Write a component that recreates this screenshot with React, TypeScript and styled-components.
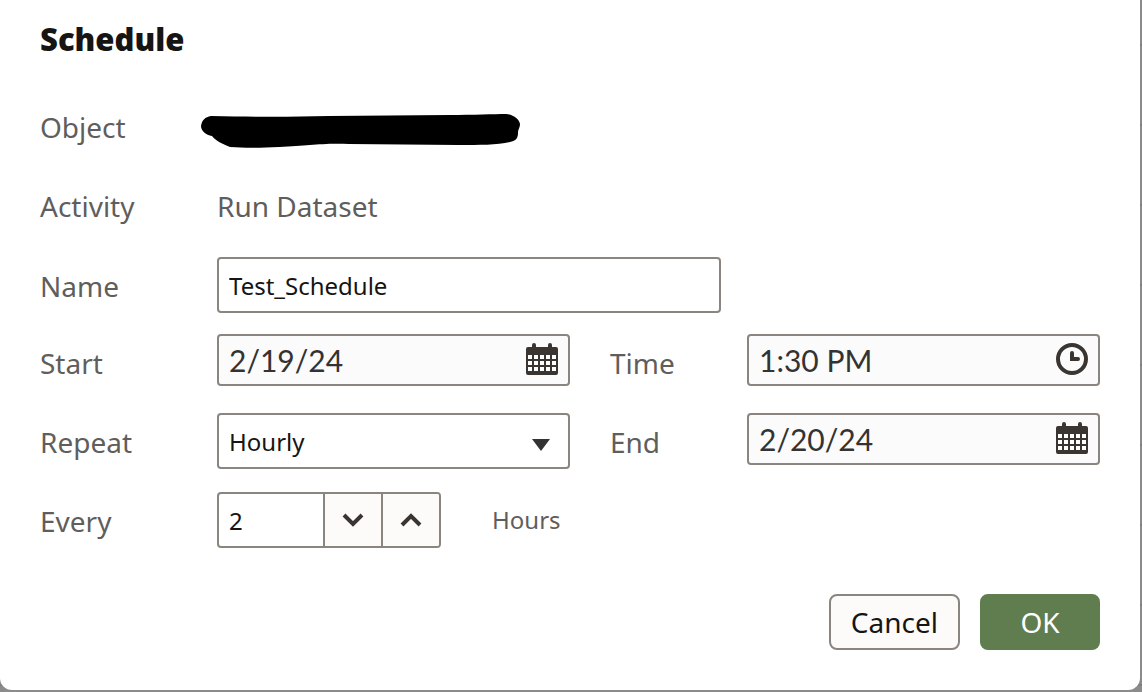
import React from "react";
import styled, { createGlobalStyle } from "styled-components";

const GlobalStyle = createGlobalStyle`
  *, *::before, *::after { box-sizing: border-box; }
  body {
    margin: 0;
    font-family: "Noto Sans", "Open Sans", sans-serif;
    color: #161513;
    background: repeating-linear-gradient(#8b8b8b 0 44px, #808080 44px 46px, #8b8b8b 46px 80px);
  }
`;

const Dialog = styled.form`
  display: flex;
  flex-direction: column;
  min-height: calc(100vh - 2px);
  margin: 0 2px 2px 0;
  padding: 15px 40px 40px;
  background: #ffffff;
  border-radius: 0 0 12px 12px;
`;

const Title = styled.h1`
  margin: 0 0 36px;
  font-size: 31px;
  line-height: 48px;
  font-weight: 900;
`;

const Groups = styled.div`
  display: flex;
  flex-direction: column;
  gap: 21px;
`;

const Rows = styled.div`
  display: flex;
  flex-direction: column;
  gap: 23px;
`;

const Row = styled.div`
  display: flex;
  gap: 40px;
  height: 56px;
`;

const Field = styled.div<{ $narrow?: boolean }>`
  display: flex;
  flex: 1 1 ${(p) => (p.$narrow ? 137 : 177)}px;
  min-width: 0;
  align-items: flex-start;
`;

const labelText = `
  font-size: 28px;
  color: #5f5e5c;
`;

const Label = styled.label<{ $narrow?: boolean }>`
  ${labelText}
  flex: 0 0 ${(p) => (p.$narrow ? 137 : 177)}px;
  line-height: 58px;
`;

const Caption = styled.span`
  ${labelText}
  flex: 0 0 177px;
  line-height: 56px;
`;

const Value = styled.span`
  ${labelText}
  line-height: 56px;
`;

const Unit = styled.span`
  margin-left: 51px;
  font-size: 24px;
  line-height: 56px;
  color: #5f5e5c;
`;

const Box = styled.div<{ $compact?: boolean; $max?: number }>`
  display: flex;
  flex: 1;
  min-width: 0;
  max-width: ${(p) => (p.$max ? `${p.$max}px` : "none")};
  height: ${(p) => (p.$compact ? 52 : 56)}px;
  border: 2px solid #8b8580;
  border-radius: 4px;
  background: ${(p) => (p.$compact ? "#fbfbfb" : "#ffffff")};
  overflow: hidden;
`;

const TextInput = styled.input`
  flex: 1;
  width: 0;
  min-width: 0;
  padding: 0 10px;
  border: 0;
  outline: 0;
  background: transparent;
  font-family: inherit;
  font-size: 24px;
  color: #161513;
`;

const DateInput = styled(TextInput)`
  font-family: Lato, "Noto Sans", sans-serif;
  font-size: 30px;
  color: #333333;
`;

const IconButton = styled.button`
  display: flex;
  align-items: center;
  justify-content: center;
  width: 52px;
  padding: 0 0 2px;
  border: 0;
  background: transparent;
  color: #3a3531;
`;

const SelectBox = styled(Box)`
  position: relative;
`;

const Select = styled.select`
  flex: 1;
  padding: 0 10px;
  border: 0;
  outline: 0;
  appearance: none;
  background: transparent;
  font-family: inherit;
  font-size: 24px;
  color: #161513;
`;

const Arrow = styled.svg`
  position: absolute;
  right: 18px;
  top: 24px;
  pointer-events: none;
`;

const StepButton = styled.button`
  display: flex;
  align-items: center;
  justify-content: center;
  width: 58px;
  padding: 0;
  border: 0;
  border-left: 2px solid #8b8580;
  background: #fcfbfa;
  color: #3a3531;
`;

const Footer = styled.div`
  display: flex;
  justify-content: flex-end;
  gap: 20px;
  margin-top: 46px;
`;

const Button = styled.button<{ $primary?: boolean }>`
  height: 56px;
  min-width: 120px;
  padding: 0 20px;
  border: 2px solid ${(p) => (p.$primary ? "#5f7d4f" : "#8b8580")};
  border-radius: 8px;
  background: ${(p) => (p.$primary ? "#5f7d4f" : "#fcfbfa")};
  color: ${(p) => (p.$primary ? "#ffffff" : "#161513")};
  font-family: inherit;
  font-size: 28px;
`;

const Redaction = styled.svg`
  margin: 12px 0 0 -18px;
`;

const CalendarIcon = () => (
  <svg width="32" height="32" viewBox="0 0 32 32" aria-hidden="true">
    <path
      fill="currentColor"
      d="M8 0a2 2 0 0 1 2 2v2h12V2a2 2 0 0 1 4 0v2h4a2 2 0 0 1 2 2v24a2 2 0 0 1-2 2H2a2 2 0 0 1-2-2V6a2 2 0 0 1 2-2h4V2a2 2 0 0 1 2-2z"
    />
    {[12, 18, 24].map((y) =>
      [2, 8, 14, 20, 26].map((x) => (
        <rect key={`${x}-${y}`} x={x} y={y} width="4" height="4" fill="#ffffff" />
      ))
    )}
  </svg>
);

const ClockIcon = () => (
  <svg width="32" height="32" viewBox="0 0 32 32" fill="none" stroke="currentColor" strokeWidth="4" aria-hidden="true">
    <circle cx="16" cy="16" r="14" />
    <path d="M16 10v6h6" strokeLinecap="round" />
  </svg>
);

const Chevron = ({ up }: { up?: boolean }) => (
  <svg width="22" height="16" viewBox="0 0 22 16" fill="none" stroke="currentColor" strokeWidth="4" aria-hidden="true">
    <path d={up ? "M2 13l9-9 9 9" : "M2 3l9 9 9-9"} />
  </svg>
);

export default function App() {
  return (
    <>
      <GlobalStyle />
      <Dialog role="dialog" aria-labelledby="title" onSubmit={(e) => e.preventDefault()}>
        <Title id="title">Schedule</Title>
        <Groups>
          <Rows>
            <Row>
              <Field>
                <Caption>Object</Caption>
                <Redaction width="324" height="38" viewBox="0 0 324 38" aria-hidden="true">
                  <path d="M12 5C60 6 90 6 130 5L250 4C275 4 295 3 307 3C315 4 320 8 321 13C321 17 319 18 319 22C319 28 316 30 311 31C298 34 280 34 260 34L150 33C120 32 110 35 80 36C60 37 45 37 31 36C23 33 16 29 13 25C7 24 2 20 2 15C3 9 6 6 12 5Z" />
                </Redaction>
              </Field>
            </Row>
            <Row>
              <Field>
                <Caption>Activity</Caption>
                <Value>Run Dataset</Value>
              </Field>
            </Row>
            <Row>
              <Field>
                <Label htmlFor="name">Name</Label>
                <Box $max={504}>
                  <TextInput id="name" defaultValue="Test_Schedule" />
                </Box>
              </Field>
            </Row>
          </Rows>
          <Rows>
            <Row>
              <Field>
                <Label htmlFor="start">Start</Label>
                <Box $compact>
                  <DateInput id="start" defaultValue="2/19/24" />
                  <IconButton type="button" aria-label="Choose start date"><CalendarIcon /></IconButton>
                </Box>
              </Field>
              <Field $narrow>
                <Label htmlFor="time" $narrow>Time</Label>
                <Box $compact>
                  <DateInput id="time" defaultValue="1:30 PM" />
                  <IconButton type="button" aria-label="Choose time"><ClockIcon /></IconButton>
                </Box>
              </Field>
            </Row>
            <Row>
              <Field>
                <Label htmlFor="repeat">Repeat</Label>
                <SelectBox>
                  <Select id="repeat" defaultValue="Hourly">
                    <option>Hourly</option>
                    <option>Daily</option>
                    <option>Weekly</option>
                    <option>Monthly</option>
                  </Select>
                  <Arrow width="18" height="12" viewBox="0 0 18 12" aria-hidden="true">
                    <path d="M0 0h18L9 12z" fill="#333333" />
                  </Arrow>
                </SelectBox>
              </Field>
              <Field $narrow>
                <Label htmlFor="end" $narrow>End</Label>
                <Box $compact>
                  <DateInput id="end" defaultValue="2/20/24" />
                  <IconButton type="button" aria-label="Choose end date"><CalendarIcon /></IconButton>
                </Box>
              </Field>
            </Row>
            <Row>
              <Field>
                <Label htmlFor="every">Every</Label>
                <Box $max={224}>
                  <TextInput id="every" inputMode="numeric" defaultValue="2" />
                  <StepButton type="button" aria-label="Decrease"><Chevron /></StepButton>
                  <StepButton type="button" aria-label="Increase"><Chevron up /></StepButton>
                </Box>
                <Unit>Hours</Unit>
              </Field>
            </Row>
          </Rows>
        </Groups>
        <Footer>
          <Button type="button">Cancel</Button>
          <Button type="submit" $primary>OK</Button>
        </Footer>
      </Dialog>
    </>
  );
}
